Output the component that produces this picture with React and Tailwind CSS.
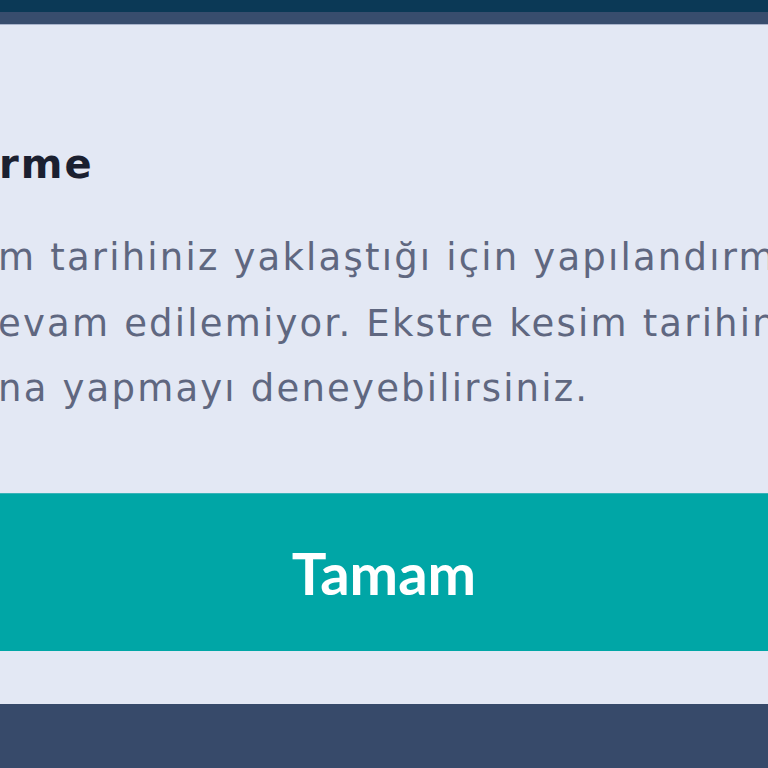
import React from 'react';

// Alert dialog (zoomed, clipped on the left/right)
const lines = [
  'm tarihiniz yaklaştığı için yapılandırma',
  'evam edilemiyor. Ekstre kesim tarihinizden',
  'na yapmayı deneyebilirsiniz.',
];

const App = () => {
  return (
    <div className="w-[768px] h-[768px] overflow-hidden flex flex-col bg-[#374a6a]">
      <div className="h-[12px] bg-[#0b3956]" />
      <div className="h-[12px] bg-[#384d6d]" />
      <div className="h-[1px] bg-[#a9b4cb]" />

      <div className="h-[679px] bg-[#e3e8f4] flex flex-col overflow-hidden" style={{ fontFamily: '"DejaVu Sans", "Noto Sans", sans-serif' }}>
        <h2 className="mt-[117px] text-[40px] leading-[44px] font-bold tracking-[2px] text-[#1b2030] whitespace-nowrap -ml-[1px]">
          rme
        </h2>

        <div className="mt-[39px] text-[37px] leading-[65.5px] tracking-[2.2px] text-[#5f6780] whitespace-nowrap">
          {lines.map((line, i) => (
            <p key={i} className="-ml-[2px]">{line}</p>
          ))}
        </div>

        <button
          className="mt-[71px] h-[158px] w-full bg-[#00a6a6] border-t border-[#38b3b8] text-white text-[58px] font-bold flex items-center justify-center"
          style={{ fontFamily: 'Lato, sans-serif' }}
        >
          Tamam
        </button>
      </div>
    </div>
  );
};

export default App;
